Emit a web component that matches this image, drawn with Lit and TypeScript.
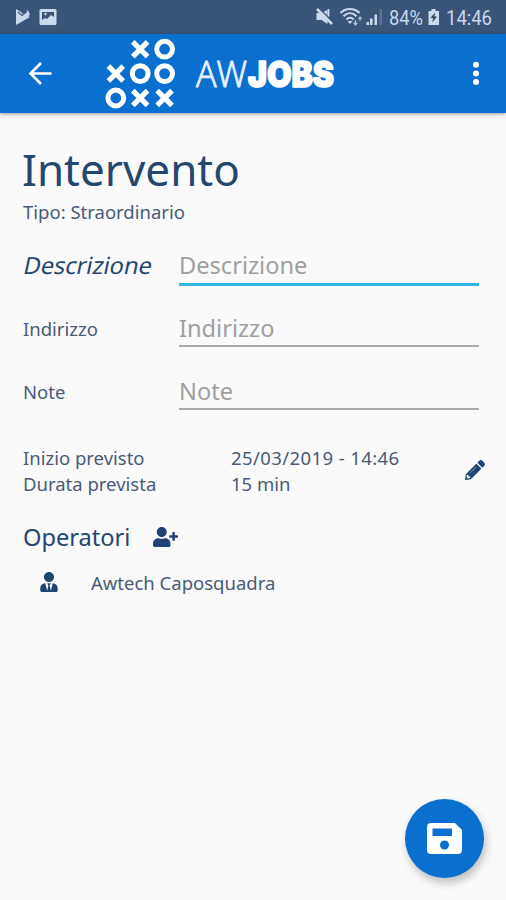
import { LitElement, html, css, svg } from "lit";
import { customElement } from "lit/decorators.js";

const LOGO = [" xo", "xoo", "oxx"];

@customElement("status-bar")
class StatusBar extends LitElement {
  static styles = css`
    :host { display: flex; align-items: center; height: 34px; background: #3a547a; }
    svg { display: block; width: 506px; height: 34px; }
    .t { font-family: Roboto, sans-serif; font-size: 20px; fill: #cbd9ec; }
  `;
  render() {
    return html`<svg viewBox="0 0 506 34">
      <g fill="#cbd9ec">
        <path d="M16 9l5 3 2 2 5-4 2 5-2 1 2 1-14 8z" />
        <path d="M18 12l4 3.500 5-4" fill="none" stroke="#3a547a" stroke-width="1.1" />
        <rect x="39.500" y="9" width="17" height="16" rx="1.500" />
        <path d="M42 12h12v5l-3-2-4 4-2-1-3 2z" fill="#3a547a" />
        <circle cx="45.500" cy="14" r="1.200" />
        <path d="M316.500 13h4l7-3v14l-6-4h-5z" />
        <path d="M328.500 9v8" stroke="#cbd9ec" stroke-width="1.800" />
        <path d="M319 8l14 14" stroke="#3a547a" stroke-width="1.500" />
        <path d="M317 9l15 15" stroke="#cbd9ec" stroke-width="2.600" />
        <g fill="none" stroke="#cbd9ec" stroke-width="2">
          <path d="M340.500 13c5-5.500 14-5.500 19 0" />
          <path d="M343.500 16.300c4-4 9-4 13 0" />
          <path d="M346.500 19.500c2-2.300 5-2.300 7 0" />
        </g>
        <path d="M347.500 21h5l-2.500 3z" />
        <path d="M355.500 20v5M353.500 22.500l2 2.500 2-2.500M360 17v4M358.500 19l1.500-2 1.500 2" fill="none" stroke="#b5c6dd" stroke-width="1.200" />
        <rect x="366.500" y="22" width="2.500" height="3" />
        <rect x="370" y="18.500" width="2.500" height="6.500" />
        <rect x="374.500" y="14.500" width="2.500" height="10.500" />
        <rect x="379.500" y="9" width="2.500" height="16" fill="#5c7293" />
        <path d="M431.500 9h4v2h3.500v14h-10.500v-14h3z" />
        <path d="M435 12.500l-4.500 5.500h2.700l-1 4.500 4.800-6h-2.700z" fill="#2d4463" />
      </g>
      <text class="t" x="389" y="24.500" textLength="34" lengthAdjust="spacingAndGlyphs">84%</text>
      <text class="t" x="446" y="24.500" textLength="46" lengthAdjust="spacingAndGlyphs">14:46</text>
    </svg>`;
  }
}

@customElement("app-bar")
class AppBar extends LitElement {
  static styles = css`
    :host { display: flex; align-items: center; height: 78.5px; box-sizing: border-box; background: #0a70d0;
      box-shadow: 0 1px 4px rgba(0, 0, 0, 0.4); }
    svg { display: block; flex: none; overflow: visible; }
    .back { margin-left: 27px; }
    .mark { margin-left: 52px; }
    .word { margin-left: 17px; }
    .more { margin-left: auto; margin-right: 24px; }
    .thin { font: 300 36.500px "Open Sans", "Noto Sans", sans-serif; fill: #e8f3ff; stroke: #e8f3ff; stroke-width: 0.9; }
    .bold { font: 900 35px Inter, Roboto, sans-serif; fill: #fff; stroke: #fff; stroke-width: 1.6; stroke-linejoin: round; }
  `;
  render() {
    const cell = (c: string, x: number, y: number) =>
      c === "o"
        ? svg`<circle cx=${x} cy=${y} r="7.9" stroke-width="5" />`
        : c === "x"
          ? svg`<path d="M${x - 7.4} ${y - 7.4}l14.8 14.8m0 -14.8l-14.8 14.8" stroke-width="5.2" />`
          : null;
    return html`
      <svg class="back" width="26" height="26" viewBox="0 0 26 26" fill="none" stroke="#fff" stroke-width="2.600">
        <path d="M24.500 13.500H3M14 3L3.500 13.500L14 24" />
      </svg>
      <svg class="mark" width="72" height="74" viewBox="0 0 72 74" fill="none" stroke="#fff">
        ${LOGO.map((row, r) => [...row].map((c, i) => cell(c, 10.8 + i * 24.4, 13.2 + r * 24.4)))}
      </svg>
      <svg class="word" width="144" height="54" viewBox="0 0 144 54">
        <text class="thin" x="2" y="40.500" textLength="51" lengthAdjust="spacingAndGlyphs">AW</text>
        <text class="bold" x="54" y="40.500" textLength="86" lengthAdjust="spacingAndGlyphs">JOBS</text>
      </svg>
      <svg class="more" width="12" height="26" viewBox="0 0 12 26" fill="#fff">
        <circle cx="6" cy="4.800" r="3" /><circle cx="6" cy="13.500" r="3" /><circle cx="6" cy="22" r="3" />
      </svg>
    `;
  }
}

@customElement("app-root")
class AppRoot extends LitElement {
  static styles = css`
    :host { display: flex; flex-direction: column; height: 900px; background: #fafafa; position: relative;
      overflow: hidden; color: #4a5a77; font-family: "Noto Sans", sans-serif; font-size: 18.5px; }
    app-bar { position: relative; }
    main { padding: 26.500px 27px 0 23px; }
    h1, h2 { margin: 0; font-weight: 400; color: #24466f; white-space: nowrap; }
    h1 { font-size: 44px; line-height: 60px; margin-left: -1px; }
    .type { line-height: 26px; margin-bottom: 18px; }
    .field { display: grid; grid-template-columns: 156px 300px; height: 63px; align-items: start; }
    .field label { padding-top: 4px; line-height: 38px; }
    .field.on label { padding-top: 4px; font-size: 23.600px; line-height: 37px; color: #24466f; }
    .tx { display: inline-block; transform: skewX(-12deg); margin-left: 1px; }
    input { box-sizing: border-box; width: 300px; height: 41px; padding: 5px 0 0; border: 0; border-radius: 0;
      border-bottom: 2px solid #aaa; background: none; outline: none; font: 23.600px "Noto Sans", sans-serif; }
    input::placeholder { color: #a0a0a0; opacity: 1; }
    .field.on input { height: 42.500px; border-bottom: 3px solid #35b5e0; padding-top: 5px; }
    .plan { display: flex; align-items: center; margin-top: 13px; }
    dl { display: grid; grid-template-columns: 208px auto; margin: 0; line-height: 26px; }
    dd { margin: 0; }
    .date { letter-spacing: 0.4px; }
    .pencil { margin-left: auto; margin-right: -6px; margin-bottom: 2px; }
    svg { display: block; flex: none; fill: #1f4474; }
    .ops { display: flex; align-items: center; gap: 23px; margin-top: 22px; height: 36px; }
    h2 { font-size: 23.600px; line-height: 36px; }
    .person { display: flex; align-items: center; height: 30px; margin-top: 12px; padding-left: 17px; gap: 33px; }
    .save { position: absolute; left: 405px; top: 799px; width: 79px; height: 79px; border: 0; padding: 0;
      border-radius: 50%; background: #0a70d0; box-shadow: 2px 5px 9px rgba(0, 0, 0, 0.24);
      display: grid; place-items: center; }
    .save svg { fill: #fff; }
  `;
  private field(name: string, on = false) {
    return html`<div class="field ${on ? "on" : ""}">
      <label>${on ? html`<span class="tx">${name}</span>` : name}</label><input placeholder=${name} />
    </div>`;
  }
  render() {
    return html`
      <status-bar></status-bar>
      <app-bar></app-bar>
      <main>
        <h1>Intervento</h1>
        <div class="type">Tipo: Straordinario</div>
        ${this.field("Descrizione", true)} ${this.field("Indirizzo")} ${this.field("Note")}
        <div class="plan">
          <dl>
            <dt>Inizio previsto</dt><dd class="date">25/03/2019 - 14:46</dd>
            <dt>Durata prevista</dt><dd>15 min</dd>
          </dl>
          <svg class="pencil" width="20" height="20" viewBox="0 0 512 512">
            <path d="M498 142l-47 47c-5 5-12 5-17 0L323 78c-5-5-5-12 0-17l47-47c19-19 49-19 68 0l60 60c19 19 19 49 0 68zM283 101L22 362 0 484c-3 17 12 31 28 28l122-21 261-261c5-5 5-12 0-17L300 101c-5-5-12-5-17 0zM88 424h48v36l-64 12-32-32 12-64h36z" />
            <path d="M134 330L288 176" fill="none" stroke="#8fa3bd" stroke-width="22" />
          </svg>
        </div>
        <div class="ops">
          <h2>Operatori</h2>
          <svg width="25" height="20" viewBox="0 0 640 512">
            <path d="M624 208h-64v-64c0-9-7-16-16-16h-32c-9 0-16 7-16 16v64h-64c-9 0-16 7-16 16v32c0 9 7 16 16 16h64v64c0 9 7 16 16 16h32c9 0 16-7 16-16v-64h64c9 0 16-7 16-16v-32c0-9-7-16-16-16zM224 256c71 0 128-57 128-128S295 0 224 0 96 57 96 128s57 128 128 128zm90 32h-17c-44 21-102 21-146 0h-17C60 288 0 348 0 422v42c0 27 21 48 48 48h352c27 0 48-21 48-48v-42c0-74-60-134-134-134z" />
          </svg>
        </div>
        <div class="person">
          <svg width="18" height="20" viewBox="0 0 448 512">
            <path d="M224 256c71 0 128-57 128-128S295 0 224 0 96 57 96 128s57 128 128 128zm96 33l-48 191-32-136 32-56h-96l32 56-32 136-48-191C57 292 0 350 0 422v42c0 27 21 48 48 48h352c27 0 48-21 48-48v-42c0-72-57-130-128-133z" />
          </svg>
          <span>Awtech Caposquadra</span>
        </div>
      </main>
      <button class="save" aria-label="Salva">
        <svg width="35" height="31" viewBox="0 0 35 31">
          <path fill-rule="evenodd" d="M4 0h24l7 7v20a4 4 0 0 1-4 4H4a4 4 0 0 1-4-4V4a4 4 0 0 1 4-4zM5.500 5.500v7.500h19.500v-7.500zM17.500 17.500a4.500 4.500 0 1 0 .01 0z" />
        </svg>
      </button>
    `;
  }
}
